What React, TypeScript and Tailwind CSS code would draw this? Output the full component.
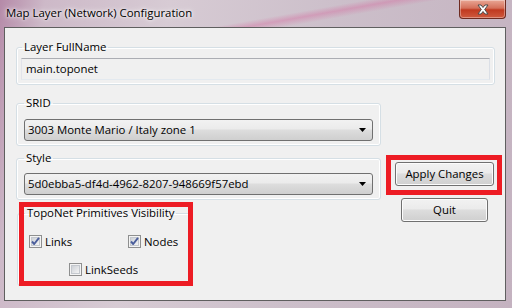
import React from 'react';

const font = { fontFamily: '"Open Sans", "Noto Sans", sans-serif' };

const Check = ({ checked }: { checked: boolean }) => (
  <svg width="13" height="13" viewBox="0 0 13 13" className="shrink-0">
    <defs>
      <linearGradient id="cbg" x1="0" y1="0" x2="1" y2="1">
        <stop offset="0" stopColor="#cbcfd5" />
        <stop offset="1" stopColor="#f6f6f6" />
      </linearGradient>
    </defs>
    <rect x="0.5" y="0.5" width="12" height="12" fill="#f4f4f4" stroke="#8e8f8f" />
    <rect x="2.5" y="2.5" width="8" height="8" fill="url(#cbg)" stroke="#c4c8ce" />
    {checked && (
      <path d="M3 6.5 L5.2 9 L10 2.8" fill="none" stroke="#4b5e9c" strokeWidth="1.9" strokeLinejoin="round" />
    )}
  </svg>
);

const Combo = ({ value }: { value: string }) => (
  <div className="flex items-center h-[22px] w-[349px] rounded-[3px] border border-[#707070] bg-[linear-gradient(#f2f2f2,#ebebeb_45%,#dddddd_50%,#cfcfcf)] pl-[3px] pr-[6px] text-black">
    <span className="flex-1 truncate">{value}</span>
    <svg width="7" height="4" viewBox="0 0 7 4">
      <path d="M0 0 H7 L3.5 4 Z" fill="#000" />
    </svg>
  </div>
);

const Btn = ({ label, w }: { label: string; w: string }) => (
  <button
    className={`${w} h-[24px] rounded-[3px] border border-[#707070] bg-[linear-gradient(#f2f2f2,#ebebeb_45%,#dddddd_50%,#cfcfcf)] text-black shadow-[inset_0_0_0_1px_#fcfcfc]`}
  >
    {label}
  </button>
);

export default function App() {
  return (
    <div
      style={font}
      className="relative w-[512px] h-[308px] overflow-hidden bg-[linear-gradient(100deg,#b58aa8_0%,#cdb9c8_8%,#d7cbd4_30%,#ccbfca_60%,#c4b2c0_100%)] text-[11.4px] leading-[16px]"
    >
      {/* title bar */}
      <div className="flex h-[27px] items-start bg-[linear-gradient(170deg,transparent_0%,transparent_55%,rgba(214,90,150,0.35)_60%,transparent_66%)]">
        <div className="pl-[6px] pt-[5px] text-black [text-shadow:0_0_6px_#ffffff,0_0_3px_#ffffff]">
          Map Layer (Network) Configuration
        </div>
        <div className="ml-auto mr-[6px] flex h-[19px] w-[47px] items-center justify-center rounded-b-[4px] border border-t-0 border-[#6e2a20] bg-[linear-gradient(#e9a795,#d4705a_45%,#c0391f_55%,#cf5a3e)] shadow-[inset_0_0_0_1px_rgba(255,255,255,0.35)]">
          <svg width="14" height="11" viewBox="0 0 14 11">
            <path
              d="M2 1 H5 L7 3.5 L9 1 H12 L8.7 5.5 L12 10 H9 L7 7.5 L5 10 H2 L5.3 5.5 Z"
              fill="#ffffff"
              stroke="#4a4a4a"
              strokeWidth="1"
              strokeLinejoin="round"
            />
          </svg>
        </div>
      </div>

      {/* client area */}
      <div className="ml-[4px] mr-[6px] h-[274px] border border-[#5f5f5f] bg-[#f0f0f0] px-[11px] pt-[11px]">
        <fieldset className="w-[479px] rounded-[3px] border border-[#d5dfe5] shadow-[inset_0_0_0_1px_#ffffff] px-[4px] pb-[4px]">
          <legend className="ml-[1px] px-[2px] leading-[16px] whitespace-nowrap">Layer FullName</legend>
          <div className="mt-[3px] flex h-[22px] items-center border border-[#abadb3] border-l-[#e2e3ea] border-r-[#dbdfe6] border-b-[#e3e9ef] bg-[#f0f0f0] pl-[4px]">
            main.toponet
          </div>
        </fieldset>

        <div className="flex">
          <div className="flex flex-col">
            <fieldset className="mt-[10px] w-[365px] rounded-[3px] border border-[#d5dfe5] shadow-[inset_0_0_0_1px_#ffffff] pl-[7px] pb-[4px]">
              <legend className="px-[2px] leading-[16px] whitespace-nowrap">SRID</legend>
              <div className="mt-[8px]">
                <Combo value="3003 Monte Mario / Italy zone 1" />
              </div>
            </fieldset>
            <fieldset className="mt-[4px] w-[365px] rounded-[3px] border border-[#d5dfe5] shadow-[inset_0_0_0_1px_#ffffff] pl-[7px] pb-[4px]">
              <legend className="px-[2px] leading-[16px] whitespace-nowrap">Style</legend>
              <div className="mt-[7px]">
                <Combo value="5d0ebba5-df4d-4962-8207-948669f57ebd" />
              </div>
            </fieldset>
            <fieldset className="mt-[5px] ml-[1px] w-[174px] h-[81px] rounded-[3px] border border-[#d5dfe5] shadow-[inset_0_0_0_1px_#ffffff] pl-[11px]">
              <legend className="-ml-[4px] px-[2px] leading-[16px] whitespace-nowrap">TopoNet Primitives Visibility</legend>
              <div className="mt-[14px] flex items-center h-[13px]">
                <div className="flex w-[99px] items-center gap-[3px]">
                  <Check checked />
                  <span>Links</span>
                </div>
                <div className="flex items-center gap-[3px]">
                  <Check checked />
                  <span>Nodes</span>
                </div>
              </div>
              <div className="mt-[15px] ml-[40px] flex h-[13px] items-center gap-[3px]">
                <Check checked={false} />
                <span>LinkSeeds</span>
              </div>
            </fieldset>
          </div>

          <div className="ml-[14px] mt-[77px] flex w-[99px] flex-col items-center gap-[12px]">
            <Btn label="Apply Changes" w="w-[99px]" />
            <Btn label="Quit" w="w-[87px]" />
          </div>
        </div>
      </div>

      {/* annotation boxes */}
      <div className="absolute left-[386px] top-[155px] h-[40px] w-[116px] border-[5px] border-[#ed1c24]" />
      <div className="absolute left-[19px] top-[202px] h-[84px] w-[174px] border-[5px] border-[#ed1c24]" />
    </div>
  );
}
